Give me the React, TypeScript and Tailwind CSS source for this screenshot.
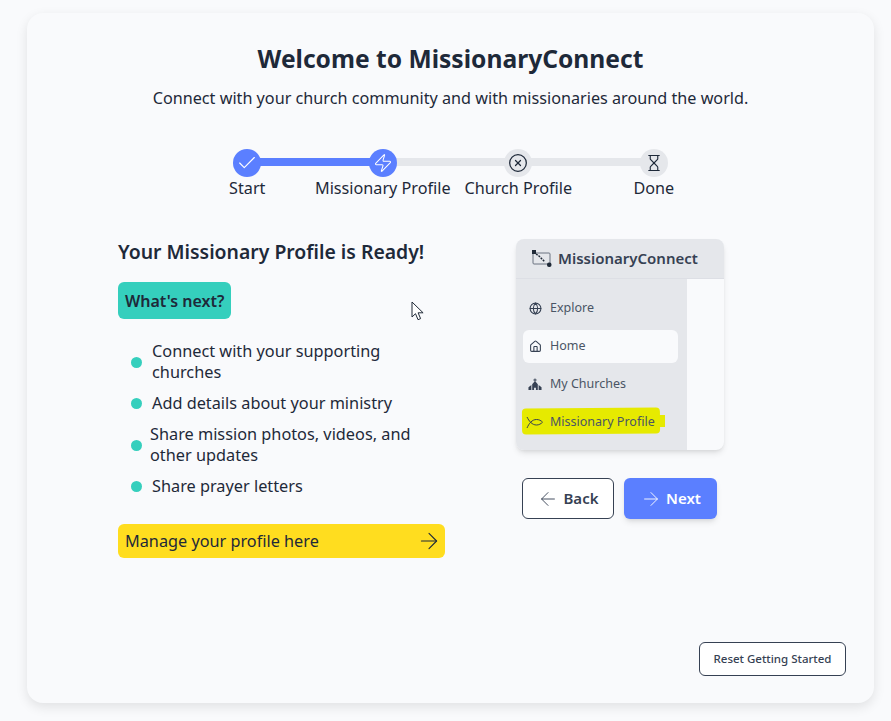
import { ArrowLeft, ArrowRight, Check, CircleX, Globe, Hourglass, House, Zap } from "lucide-react";
import type { ReactNode } from "react";

const steps = [
  { label: "Start", done: true, icon: <Check size={22} strokeWidth={1.25} className="text-white" /> },
  { label: "Missionary Profile", done: true, icon: <Zap size={20} strokeWidth={1.25} className="text-white" /> },
  { label: "Church Profile", done: false, icon: <CircleX size={20} strokeWidth={1.5} className="text-gray-800" /> },
  { label: "Done", done: false, icon: <Hourglass size={18} strokeWidth={1.5} className="text-gray-800" /> },
];

function Stepper() {
  return (
    <div className="flex justify-center">
      {steps.map((step, i) => (
        <div key={step.label} className="relative flex w-[135.5px] flex-col items-center">
          {i < steps.length - 1 && (
            <div className={`absolute left-1/2 top-[9px] h-2 w-full ${i === 0 ? "bg-[#5b7fff]" : "bg-gray-200"}`} />
          )}
          <div
            className={`relative flex h-7 w-7 items-center justify-center rounded-full ${
              step.done ? "bg-[#5b7fff]" : "bg-gray-200"
            }`}
          >
            {step.icon}
          </div>
          <span className="-mt-[1px] whitespace-nowrap text-[16.2px] leading-6 text-gray-800">{step.label}</span>
        </div>
      ))}
    </div>
  );
}

const nextItems = [
  { text: "Connect with your supporting churches", gap: "gap-[10px]" },
  { text: "Add details about your ministry", gap: "gap-[10px]" },
  { text: "Share mission photos, videos, and other updates", gap: "gap-[8px]" },
  { text: "Share prayer letters", gap: "gap-[10px]" },
];

function NavRow({ icon, label, active }: { icon: ReactNode; label: string; active?: boolean }) {
  return (
    <div className={`relative flex h-[33px] items-center gap-[8px] rounded-md px-[5px] text-[12.5px] text-gray-600 ${active ? "bg-[#f9fafc]" : ""}`}>
      <span className="flex w-[14px] justify-center">{icon}</span>
      <span>{label}</span>
    </div>
  );
}

function ChurchIcon() {
  return (
    <svg width="15" height="13" viewBox="0 0 15 13" className="text-gray-700" fill="currentColor">
      <path d="M7 0h1v1.200h1.200v1H8v1.200l2.500 2.800v6.300h-2v-2.500h-2v2.500h-2V6.200L7 3.400V2.200H5.800v-1H7z" />
      <path d="M3.600 7L.5 9.500v3h3.100zM11.400 7l3.100 2.500v3h-3.100z" />
    </svg>
  );
}

function FishIcon() {
  return (
    <svg width="18" height="13" viewBox="0 0 18 13" fill="none" stroke="#374151" strokeWidth="1" className="shrink-0">
      <path d="M1 1c2 4 5 8 9.500 8 2.500 0 4.500-1.200 6-2.800C15 4.500 13 3.500 10.500 3.500 6 3.500 3 7.500 1 12" />
    </svg>
  );
}

function LogoIcon() {
  return (
    <svg width="21" height="18" viewBox="0 0 21 18" className="text-gray-700">
      <rect x="1" y="3" width="17" height="11" rx="1" fill="none" stroke="#6b7280" strokeWidth="1" />
      <rect x="0" y="0" width="4" height="4" fill="#1f2937" />
      <path d="M4 4l3 2 3 3 3 3" stroke="#1f2937" strokeWidth="1.500" strokeDasharray="2 1" fill="none" />
      <rect x="15" y="12.500" width="4.500" height="4.500" rx="2" fill="#1f2937" />
    </svg>
  );
}

function Preview() {
  return (
    <div className="w-[208px] overflow-hidden rounded-lg bg-[#f9fafc] shadow-md">
      <div className="flex h-[40px] items-center gap-[5px] border-b border-gray-300/40 bg-gray-200 pl-[16px] text-[15px] font-semibold text-gray-700">
        <LogoIcon />
        <span>MissionaryConnect</span>
      </div>
      <div className="flex">
        <div className="flex h-[171px] w-[171px] flex-col gap-[5px] bg-gray-200 pl-[7px] pr-[9px] pt-[13px]">
          <NavRow icon={<Globe size={13} className="text-gray-700" />} label="Explore" />
          <NavRow icon={<House size={13} className="text-gray-700" />} label="Home" active />
          <NavRow icon={<ChurchIcon />} label="My Churches" />
          <div className="relative">
            <div className="absolute -left-[1px] top-[2px] h-[26px] w-[138px] -rotate-[0.5deg] rounded-sm bg-[#e6ea00]" />
            <div className="absolute left-[136px] top-[9px] h-[12px] w-[6px] bg-[#e6ea00]" />
            <NavRow icon={<FishIcon />} label="Missionary Profile" />
          </div>
        </div>
      </div>
    </div>
  );
}

export default function App() {
  return (
    <div className="h-[721px] overflow-hidden bg-[#f9fafc] pl-[27px] pr-[17px] pt-[13px] font-['Noto_Sans',sans-serif]">
      <div className="relative h-[690px] rounded-2xl bg-[#f9fafc] pt-[28px] shadow-[0_4px_12px_rgba(0,0,0,0.1)]">
        <h1 className="text-center text-[24.6px] font-bold leading-9 text-gray-800">Welcome to MissionaryConnect</h1>
        <p className="mt-[9px] text-center text-[16.2px] leading-6 text-gray-800">
          Connect with your church community and with missionaries around the world.
        </p>

        <div className="mt-[39px]">
          <Stepper />
        </div>

        <div className="mt-[38px] flex pl-[91px]">
          <div className="w-[327px]">
            <h2 className="text-[19.4px] font-semibold leading-7 text-gray-800">Your Missionary Profile is Ready!</h2>
            <div className="mt-[16px] inline-flex h-[37px] items-center rounded-md bg-[#35cfbd] px-[7px] text-base font-semibold text-gray-800">
              What's next?
            </div>
            <ul className="mt-[22px] flex flex-col gap-[10px] pl-[13px]">
              {nextItems.map((item) => (
                <li key={item.text} className={`flex items-center ${item.gap} pr-[20px] text-[16.3px] leading-[21px] text-gray-800`}>
                  <span className="h-[11px] w-[11px] shrink-0 rounded-full bg-[#35cfbd]" />
                  <span>{item.text}</span>
                </li>
              ))}
            </ul>
            <div className="mt-[27px] flex h-[34px] items-center justify-between rounded-md bg-[#ffdd1f] pl-[7px] pr-[3px] text-[16.25px] text-gray-800">
              <span>Manage your profile here</span>
              <ArrowRight size={26} strokeWidth={1} />
            </div>
          </div>

          <div className="ml-[71px] mt-[1px]">
            <Preview />
            <div className="mt-[28px] flex gap-[10px] pl-[6px]">
              <button className="flex h-[41px] w-[92px] items-center justify-center gap-[4px] rounded-md border border-gray-700 bg-white text-[15px] font-semibold text-gray-700">
                <ArrowLeft size={22} strokeWidth={1} />
                Back
              </button>
              <button className="flex h-[41px] w-[93px] items-center justify-center gap-[4px] rounded-md bg-[#5b7fff] text-[15px] font-semibold text-white shadow-md">
                <ArrowRight size={22} strokeWidth={1} />
                Next
              </button>
            </div>
          </div>
        </div>

        <button className="absolute bottom-[27px] right-[28px] h-[34px] w-[147px] rounded-md border border-gray-700 bg-white text-[11.5px] font-medium text-gray-700">
          Reset Getting Started
        </button>

        {/* mouse pointer caught in the screenshot */}
        <svg width="14" height="20" viewBox="0 0 14 20" className="absolute left-[384px] top-[288px]">
          <path d="M1 1v15l3.500-3.300 2.500 6 2.600-1.100-2.500-5.800h5z" fill="white" stroke="#1f2937" strokeWidth="1" />
        </svg>
      </div>
    </div>
  );
}
